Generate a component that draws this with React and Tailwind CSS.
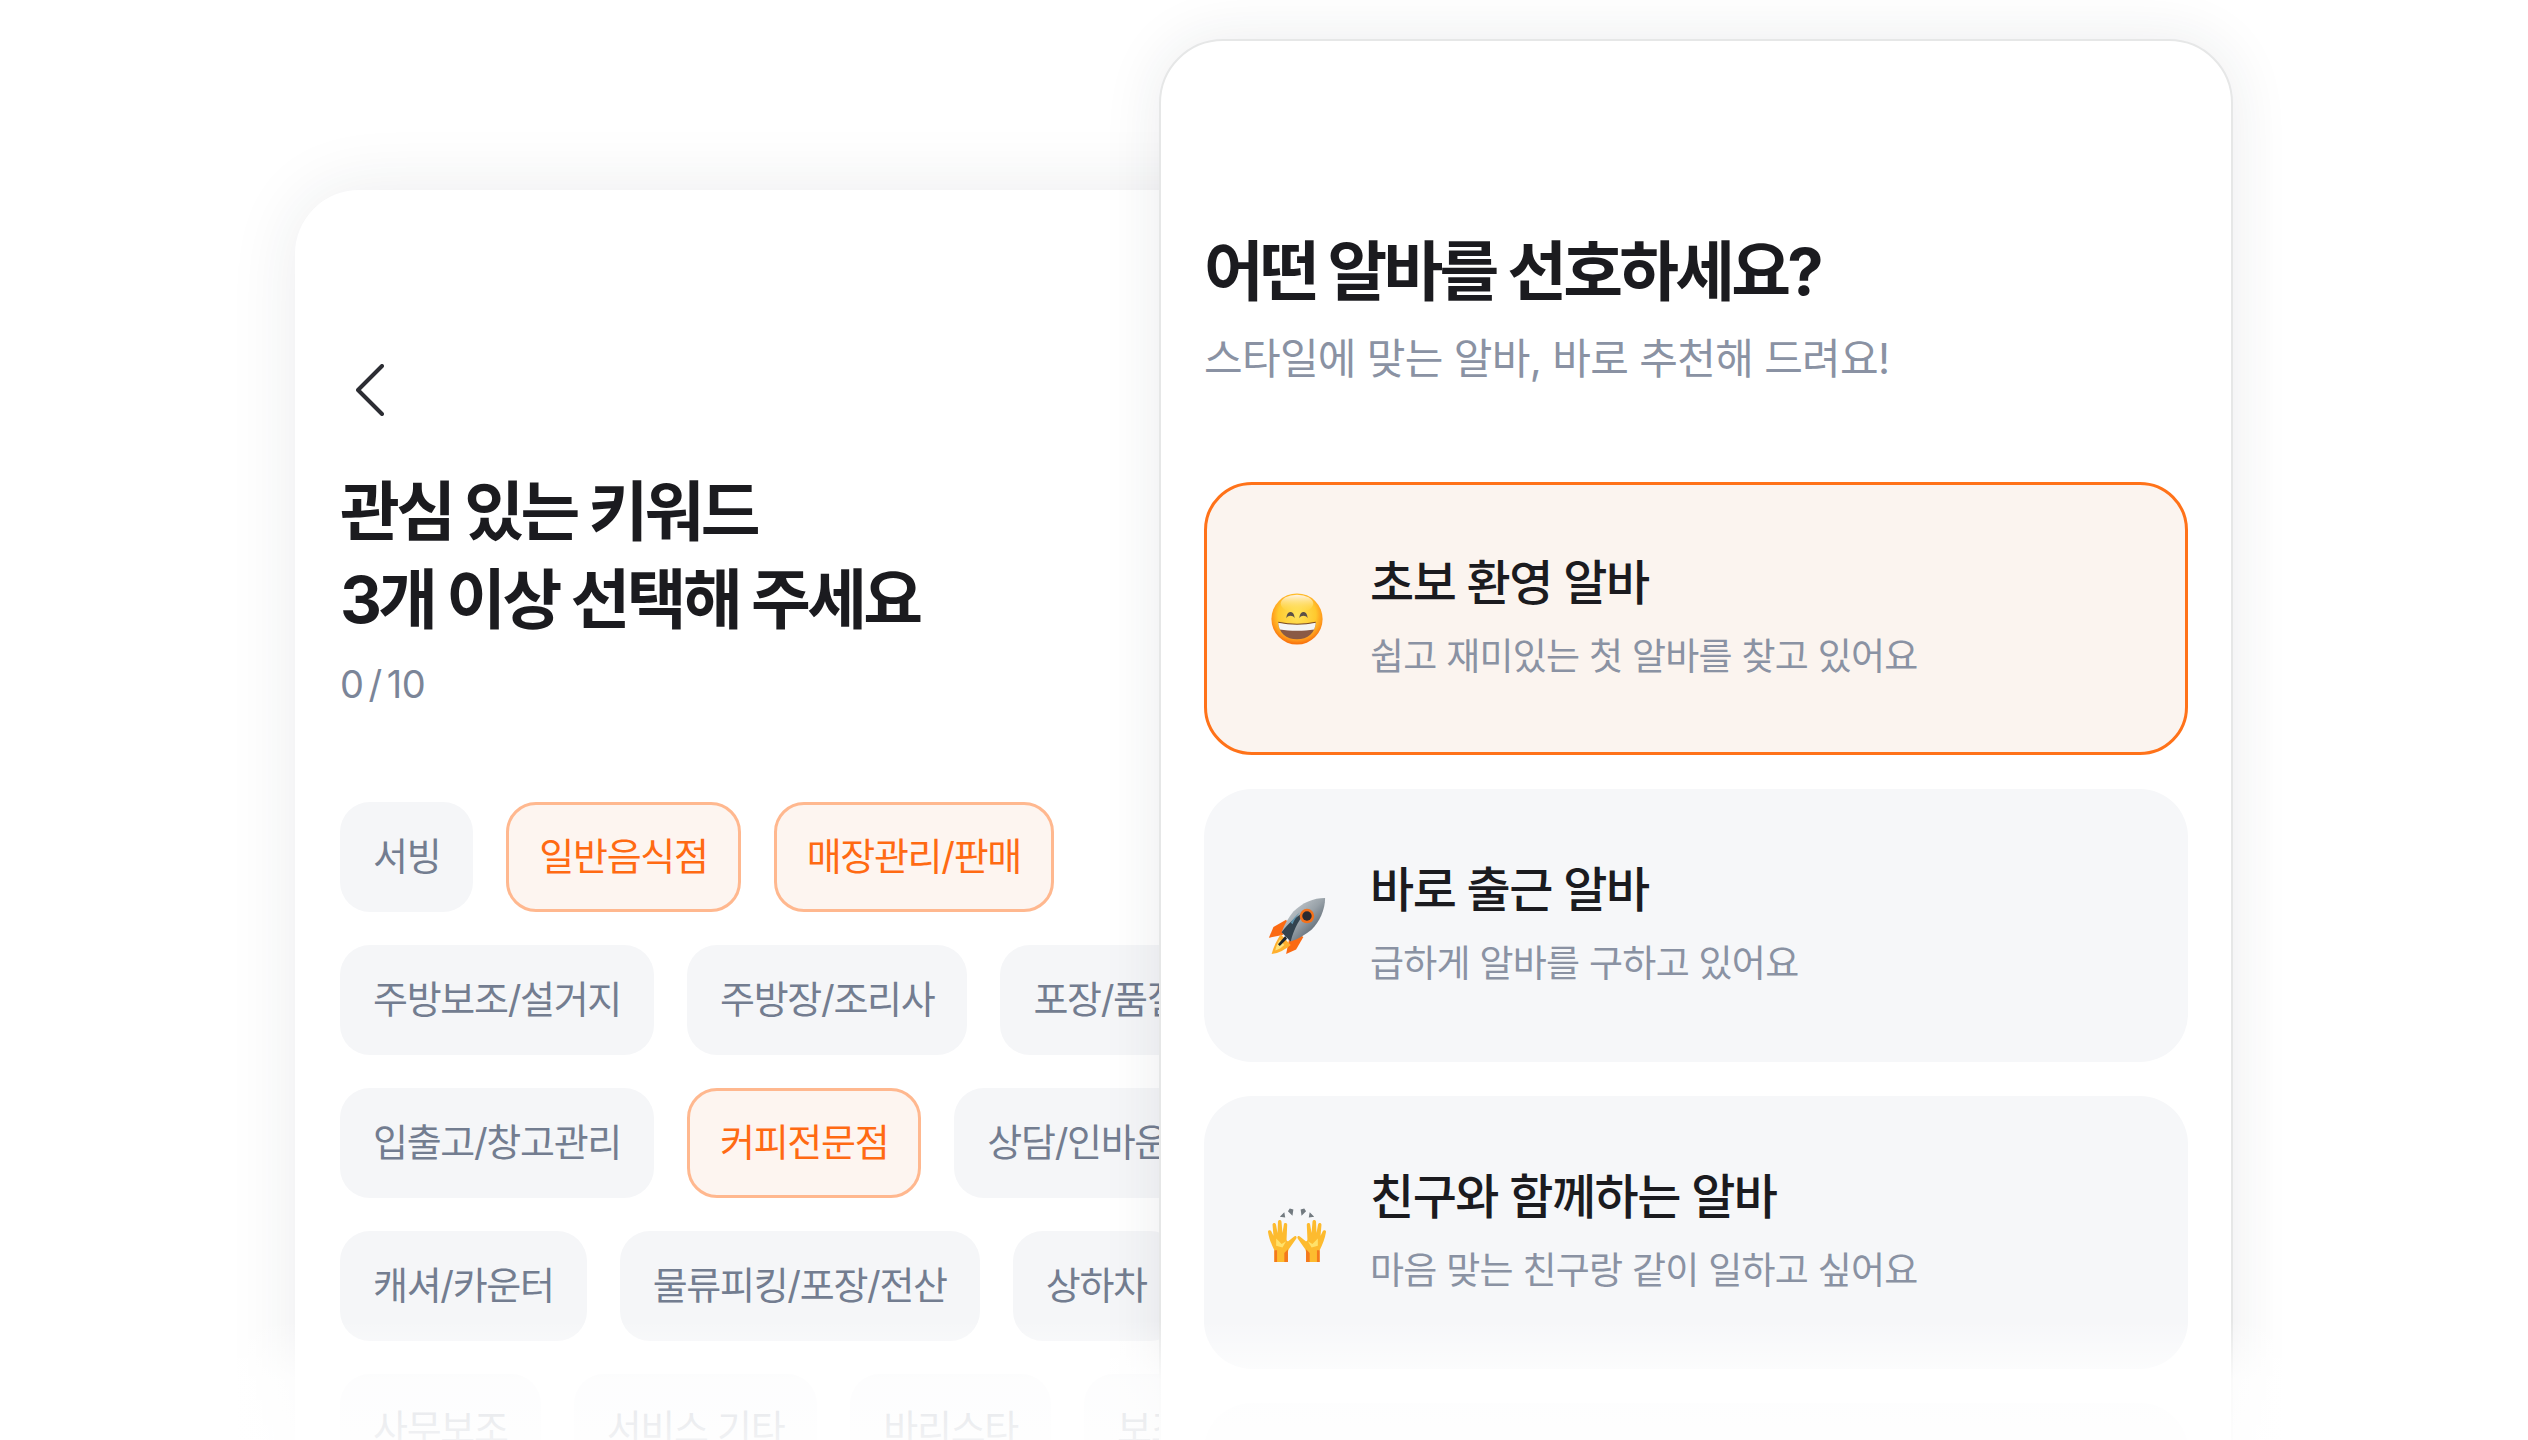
const FONT = "font-['Inter','Noto_Sans_CJK_KR',sans-serif]";

const keywordRows = [
  [['서빙'], ['일반음식점', true], ['매장관리/판매', true]],
  [['주방보조/설거지'], ['주방장/조리사'], ['포장/품질관리']],
  [['입출고/창고관리'], ['커피전문점', true], ['상담/인바운드']],
  [['캐셔/카운터'], ['물류피킹/포장/전산'], ['상하차']],
  [['사무보조'], ['서비스 기타'], ['바리스타'], ['보조']],
];

function SmileEmoji() {
  return (
    <svg viewBox="0 0 64 64" className="w-[52px] h-[52px] mx-[3px] shrink-0">
      <defs>
        <radialGradient id="face" cx="50%" cy="42%" r="56%">
          <stop offset="0%" stopColor="#ffe45c" />
          <stop offset="66%" stopColor="#ffc92e" />
          <stop offset="88%" stopColor="#ff9a1c" />
          <stop offset="100%" stopColor="#f9760f" />
        </radialGradient>
        <linearGradient id="shine" x1="0" y1="0" x2="0" y2="1">
          <stop offset="0%" stopColor="#fff4ea" />
          <stop offset="100%" stopColor="#ffe45c" stopOpacity="0" />
        </linearGradient>
      </defs>
      <circle cx="32" cy="32" r="31.500" fill="url(#face)" />
      <ellipse cx="32" cy="13" rx="20" ry="11" fill="url(#shine)" />
      <path d="M19 31c0-10 10-10 10 0-2-4-8-4-10 0zM35 31c0-10 10-10 10 0-2-4-8-4-10 0z" fill="#5c5148" />
      <path d="M9 36c14 3 32 3 46 0 0 13-10 21-23 21S9 49 9 36z" fill="#8a5a45" />
      <path d="M9 36c14 3 32 3 46 0 0 3-1 7-2 9-12 2-30 2-42 0-1-2-2-6-2-9z" fill="#f4f4f4" />
      <path d="M9 36c14 3 32 3 46 0" fill="none" stroke="#7a4a1e" strokeWidth="1.500" />
    </svg>
  );
}

function RocketEmoji() {
  return (
    <svg viewBox="0 0 64 64" className="w-[58px] h-[58px] shrink-0">
      <defs>
        <linearGradient id="hull" x1="0" y1="0" x2="1" y2="1">
          <stop offset="0%" stopColor="#dde1e4" />
          <stop offset="50%" stopColor="#98a1a8" />
          <stop offset="100%" stopColor="#2f3d4a" />
        </linearGradient>
      </defs>
      <path d="M20 25 6 33 1 45l15-3 9-8z" fill="#fb6a12" />
      <path d="M39 44 31 58l-11 5 3-15 8-9z" fill="#fb6a12" />
      <path d="M14 41c-4 6-8 14-10 22 8-1 15-5 21-10z" fill="#ffb02e" />
      <path d="M13 47c-2 4-4 7-5 12 4-1 7-3 10-6z" fill="#ffe27a" />
      <path d="M63 1c-13 0-25 5-35 15-5 6-10 14-13 23l10 10c9-3 17-8 23-13C57 27 63 14 63 1z" fill="url(#hull)" />
      <path d="M15 39c8-11 17-18 28-24-8 9-14 19-18 34z" fill="#33434f" />
      <path d="M25 28c3-4 6-8 10-11-3 4-6 8-8 13z" fill="#5e93ad" />
      <circle cx="43" cy="21" r="8" fill="#f4711a" />
      <circle cx="43" cy="21" r="5.200" fill="#2a2a30" />
      <path d="M19 43 11 52l2 2 8-8z" fill="#1f262c" />
    </svg>
  );
}

function Hand({ flip }) {
  return (
    <g transform={flip ? 'matrix(-1 0 0 1 64 0)' : undefined}>
      <path
        d="M7 64V51C4 45 1 38 0 31c-.4-2.400 2.800-3 3.600-.8L6 35 5 23c-.2-2.600 3.400-3 3.800-.4L10.500 32 11 19.500c.1-2.600 3.800-2.600 3.900 0L16 32l1.500-9.500c.4-2.500 3.900-2 3.700.5L20.500 39c0 2 1 3 2.500 1.500L28.500 36c2-1.700 4 .3 2.600 2.300L23.500 49c-1 1.500-1.500 3-1.500 5v10z"
        fill="#fdbb2f"
      />
      <path d="M7 64V51h3v13zM18 64v-10l4-4v14z" fill="#f4791d" />
      <path d="M9 38l6 6 5-3-4 7-7-2z" fill="#ffe26a" />
    </g>
  );
}

function HandsEmoji() {
  return (
    <svg viewBox="0 0 64 64" className="w-[58px] h-[58px] shrink-0">
      <Hand />
      <Hand flip />
      <path d="M13 14l5-5 1 6zM24 5l4 1-1 7-5-5zM40 5l-4 1 1 7 5-5zM51 14l-5-5-1 6z" fill="#727a80" />
    </svg>
  );
}

function Chip({ label, active }) {
  return (
    <div
      className={`shrink-0 h-[110px] px-[30px] pb-[2px] rounded-[30px] flex items-center text-[38px] tracking-[-1.3px] whitespace-nowrap border-[3px] ${
        active ? 'bg-[#fdf5f0] border-[#ffb88f] text-[#ff6a13]' : 'bg-[#f5f6f8] border-transparent text-[#737d90]'
      }`}
    >
      {label}
    </div>
  );
}

function Option({ emoji, title, desc, active }) {
  return (
    <div
      className={`h-[273px] rounded-[48px] pl-[61px] flex items-center gap-[44px] border-[3px] ${
        active ? 'bg-[#fbf4ef] border-[#ff7219]' : 'bg-[#f6f7f9] border-transparent'
      }`}
    >
      {emoji}
      <div className="flex flex-col gap-[18px] -mt-[3px]">
        <div className="text-[48px] leading-[62px] font-medium tracking-[-1.5px] text-[#1b1b1f]">{title}</div>
        <div className="text-[37px] leading-[50px] tracking-[-0.75px] text-[#8a92a3]">{desc}</div>
      </div>
    </div>
  );
}

export default function App() {
  return (
    <div className={`${FONT} relative w-screen h-screen overflow-hidden bg-white flex items-start pl-[295px] pt-[190px]`}>
      {/* keyword card, sits behind the other one */}
      <div className="shrink-0 w-[1000px] h-[1300px] bg-white rounded-tl-[64px] shadow-[0_0_70px_rgba(30,40,60,0.09)] pl-[45px] pt-[174px] overflow-hidden">
        <svg viewBox="0 0 28 52" className="w-[28px] h-[52px] ml-[16px] text-[#2c2d33]" fill="none" stroke="currentColor" strokeWidth="4" strokeLinecap="round" strokeLinejoin="round">
          <path d="M26 2 2 26l24 24" />
        </svg>
        <h1 className="mt-[52px] text-[65px] leading-[88px] font-bold tracking-[-3.6px] text-[#1b1b1f]">
          관심 있는 키워드
          <br />
          3개 이상 선택해 주세요
        </h1>
        <div className="mt-[15px] text-[38px] leading-[50px] tracking-[-0.5px] text-[#7b8598]">
          0<span className="mx-[5px]">/</span>10
        </div>
        <div className="mt-[93px] flex flex-col gap-[33px]">
          {keywordRows.map((row, i) => (
            <div key={i} className="flex gap-[33px]">
              {row.map(([label, active]) => (
                <Chip key={label} label={label} active={active} />
              ))}
            </div>
          ))}
        </div>
      </div>

      {/* job style card */}
      <div className="relative shrink-0 -ml-[136px] -mt-[151px] w-[1074px] h-[1500px] bg-white rounded-t-[64px] border-2 border-[#e6e7e7] shadow-[0_0_60px_rgba(30,40,60,0.09)] px-[43px] pt-[187px]">
        <h2 className="text-[65px] leading-[87px] font-bold tracking-[-3.8px] text-[#1b1b1f]">어떤 알바를 선호하세요?</h2>
        <p className="mt-[16px] text-[42px] leading-[56px] tracking-[-0.7px] text-[#8a92a3]">스타일에 맞는 알바, 바로 추천해 드려요!</p>
        <div className="mt-[95px] flex flex-col gap-[34px]">
          <Option active emoji={<SmileEmoji />} title="초보 환영 알바" desc="쉽고 재미있는 첫 알바를 찾고 있어요" />
          <Option emoji={<RocketEmoji />} title="바로 출근 알바" desc="급하게 알바를 구하고 있어요" />
          <Option emoji={<HandsEmoji />} title="친구와 함께하는 알바" desc="마음 맞는 친구랑 같이 일하고 싶어요" />
          <Option title="" desc="" />
        </div>
      </div>

      {/* fade at the bottom of the page */}
      <div className="absolute inset-x-0 bottom-0 h-[120px] bg-gradient-to-b from-white/0 via-white/80 via-50% to-white/90" />
    </div>
  );
}
